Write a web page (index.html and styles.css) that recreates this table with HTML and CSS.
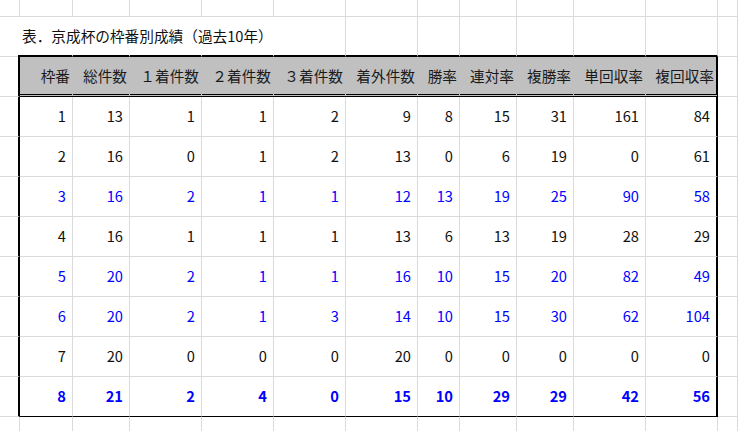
FILE: index.html
```html
<!DOCTYPE html>
<html lang="ja">
<head>
<meta charset="utf-8">
<title>京成杯の枠番別成績</title>
<link rel="stylesheet" href="styles.css">
</head>
<body>
<div class="sheet">
  <div class="row">
    <div class="c"></div><div class="c"></div><div class="c"></div><div class="c"></div><div class="c"></div><div class="c"></div><div class="c"></div><div class="c"></div><div class="c"></div><div class="c"></div><div class="c"></div><div class="c"></div><div class="c"></div>
  </div>
  <div class="row">
    <div class="c ta"></div>
    <div class="c tc nb title">表．京成杯の枠番別成績（過去10年）</div>
    <div class="c tc nb"></div><div class="c tc nb"></div><div class="c tc nb"></div>
    <div class="c tc"></div><div class="c tc"></div><div class="c tc"></div><div class="c tc"></div><div class="c tc"></div><div class="c tc"></div><div class="c tc"></div>
    <div class="c"></div>
  </div>
  <div class="row">
    <div class="c ea"></div>
    <div class="c h">枠番</div>
    <div class="c h">総件数</div>
    <div class="c h">１着件数</div>
    <div class="c h">２着件数</div>
    <div class="c h">３着件数</div>
    <div class="c h">着外件数</div>
    <div class="c h">勝率</div>
    <div class="c h">連対率</div>
    <div class="c h">複勝率</div>
    <div class="c h">単回収率</div>
    <div class="c h el">複回収率</div>
    <div class="c"></div>
  </div>
  <div class="row">
    <div class="c ea"></div>
    <div class="c n">1</div><div class="c n">13</div><div class="c n">1</div><div class="c n">1</div><div class="c n">2</div><div class="c n">9</div><div class="c n">8</div><div class="c n">15</div><div class="c n">31</div><div class="c n">161</div><div class="c n el">84</div>
    <div class="c"></div>
  </div>
  <div class="row">
    <div class="c ea"></div>
    <div class="c n">2</div><div class="c n">16</div><div class="c n">0</div><div class="c n">1</div><div class="c n">2</div><div class="c n">13</div><div class="c n">0</div><div class="c n">6</div><div class="c n">19</div><div class="c n">0</div><div class="c n el">61</div>
    <div class="c"></div>
  </div>
  <div class="row blue">
    <div class="c ea"></div>
    <div class="c n">3</div><div class="c n">16</div><div class="c n">2</div><div class="c n">1</div><div class="c n">1</div><div class="c n">12</div><div class="c n">13</div><div class="c n">19</div><div class="c n">25</div><div class="c n">90</div><div class="c n el">58</div>
    <div class="c"></div>
  </div>
  <div class="row">
    <div class="c ea"></div>
    <div class="c n">4</div><div class="c n">16</div><div class="c n">1</div><div class="c n">1</div><div class="c n">1</div><div class="c n">13</div><div class="c n">6</div><div class="c n">13</div><div class="c n">19</div><div class="c n">28</div><div class="c n el">29</div>
    <div class="c"></div>
  </div>
  <div class="row blue">
    <div class="c ea"></div>
    <div class="c n">5</div><div class="c n">20</div><div class="c n">2</div><div class="c n">1</div><div class="c n">1</div><div class="c n">16</div><div class="c n">10</div><div class="c n">15</div><div class="c n">20</div><div class="c n">82</div><div class="c n el">49</div>
    <div class="c"></div>
  </div>
  <div class="row blue">
    <div class="c ea"></div>
    <div class="c n">6</div><div class="c n">20</div><div class="c n">2</div><div class="c n">1</div><div class="c n">3</div><div class="c n">14</div><div class="c n">10</div><div class="c n">15</div><div class="c n">30</div><div class="c n">62</div><div class="c n el">104</div>
    <div class="c"></div>
  </div>
  <div class="row">
    <div class="c ea"></div>
    <div class="c n">7</div><div class="c n">20</div><div class="c n">0</div><div class="c n">0</div><div class="c n">0</div><div class="c n">20</div><div class="c n">0</div><div class="c n">0</div><div class="c n">0</div><div class="c n">0</div><div class="c n el">0</div>
    <div class="c"></div>
  </div>
  <div class="row blue bold">
    <div class="c ea"></div>
    <div class="c n last">8</div><div class="c n last">21</div><div class="c n last">2</div><div class="c n last">4</div><div class="c n last">0</div><div class="c n last">15</div><div class="c n last">10</div><div class="c n last">29</div><div class="c n last">29</div><div class="c n last">42</div><div class="c n last el">56</div>
    <div class="c"></div>
  </div>
  <div class="row">
    <div class="c"></div><div class="c"></div><div class="c"></div><div class="c"></div><div class="c"></div><div class="c"></div><div class="c"></div><div class="c"></div><div class="c"></div><div class="c"></div><div class="c"></div><div class="c"></div><div class="c"></div>
  </div>
</div>
</body>
</html>
```

FILE: styles.css
```css
html, body {
  margin: 0;
  padding: 0;
  background: #ffffff;
}

.sheet {
  display: grid;
  grid-template-columns: 20px 53px 57px 72px 72px 72px 72px 42px 57px 57px 72px 72px 20px;
  grid-template-rows: 17px repeat(11, 40px);
  width: 738px;
  height: 431px;
  overflow: hidden;
  font-family: "Noto Sans CJK JP", "Noto Sans", sans-serif;
  font-size: 14.67px;
  color: #111111;
}

.row {
  display: contents;
}

.c {
  box-sizing: border-box;
  border-right: 1px solid #dadada;
  border-bottom: 1px solid #dadada;
  display: flex;
  align-items: center;
  justify-content: flex-end;
  white-space: nowrap;
  line-height: 20px;
  min-width: 0;
}

.nb {
  border-right-color: transparent;
}

.ta {
  border-right-color: transparent;
  border-bottom-color: transparent;
  background:
    linear-gradient(#000, #000) right bottom / 2px 2px no-repeat,
    linear-gradient(#dadada, #dadada) left bottom / 100% 1px no-repeat;
  background-origin: border-box;
}

.tc {
  border-bottom: 2px solid #000;
}

.title {
  justify-content: flex-start;
  padding-left: 2px;
  overflow: visible;
  color: #111111;
}

.h {
  background: #c0c0c0;
  border-right-color: transparent;
  border-bottom: 3px double #000;
  padding-right: 2px;
  color: #1a1a1a;
}

.ea {
  border-right: 2px solid #000;
}

.el {
  border-right: 2px solid #000;
}

.n {
  padding-right: 6px;
  padding-bottom: 1px;
}

.last {
  border-bottom-color: #000;
}

.blue {
  color: #0000ff;
}

.bold {
  font-weight: 700;
}
```
